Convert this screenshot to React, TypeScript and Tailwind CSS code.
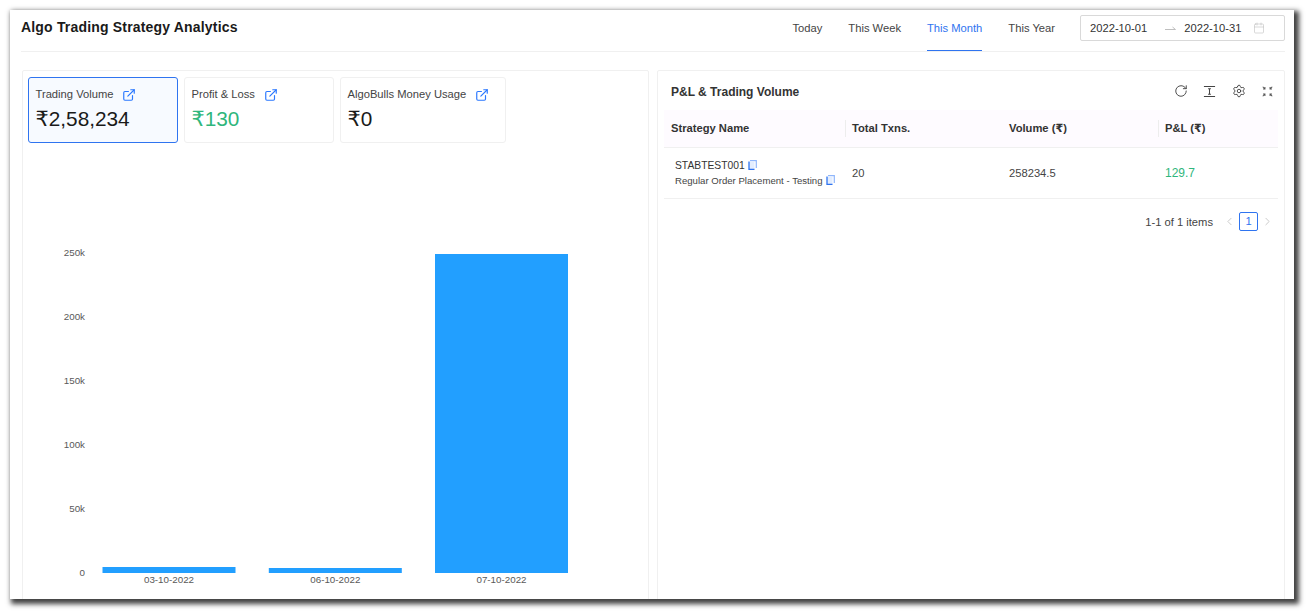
import { Calendar, ChevronLeft, ChevronRight, ExternalLink, RotateCw, Settings } from 'lucide-react';

const stats = [
  { label: 'Trading Volume', value: '₹2,58,234', width: 'w-[150px]', active: true, color: 'text-[#1a1a1a]', gap: 'ml-[9px]' },
  { label: 'Profit & Loss', value: '₹130', width: 'w-[150px]', active: false, color: 'text-[#2fb67c]', gap: 'ml-[9px]' },
  { label: 'AlgoBulls Money Usage', value: '₹0', width: 'w-[166px]', active: false, color: 'text-[#1a1a1a]', gap: 'ml-[9px]' },
];

const ticks = [
  { label: '250k', y: 253 },
  { label: '200k', y: 317 },
  { label: '150k', y: 381 },
  { label: '100k', y: 445 },
  { label: '50k', y: 509 },
  { label: '0', y: 573 },
];

const bars = [
  { x: 102.5, y: 567, h: 6, label: '03-10-2022' },
  { x: 268.8, y: 568, h: 5, label: '06-10-2022' },
  { x: 435, y: 254, h: 319, label: '07-10-2022' },
];

function CopyIcon() {
  return (
    <svg viewBox="0 0 9 10" className="w-[9px] h-[10px] inline-block ml-[3px] align-[-1px]" fill="none">
      <path d="M1 2H6.5V9.4H1Z" fill="#e3edfe" />
      <path d="M2 0.7H8.3V8" stroke="#8fb6fb" strokeWidth="1.2" />
      <path d="M1 1.5V9.4H6.5" stroke="#2f74f0" strokeWidth="1.3" />
    </svg>
  );
}

function ColumnHeightIcon() {
  return (
    <svg viewBox="0 0 14 14" className="w-[13px] h-[13px]" fill="none" stroke="#444" strokeWidth="1.1">
      <path d="M1 1.5H13M1 12.5H13M7 4V10M5.5 4H8.5M5.5 10H8.5" />
    </svg>
  );
}

function CompressIcon() {
  return (
    <svg viewBox="0 0 12 12" className="w-[11px] h-[11px]" fill="none" stroke="#555" strokeWidth="1.1">
      <path d="M0.8 0.8L3 3M3.2 1.2V3.2H1.2M11.2 0.8L9 3M8.8 1.2V3.2H10.8M0.8 11.2L3 9M1.2 8.8H3.2V10.8M11.2 11.2L9 9M10.8 8.8H8.8V10.8" />
    </svg>
  );
}

function HalfArrow() {
  return (
    <svg viewBox="0 0 11 6" className="w-[11px] h-[6px] ml-[18px]" fill="none" stroke="#bfbfbf" strokeWidth="1">
      <path d="M0 4.5H10.5L7.5 2" />
    </svg>
  );
}

function VolumeChart() {
  return (
    <svg width="626" height="456" viewBox="23 143 626 456" className="block">
      {ticks.map((t) => (
        <text key={t.label} x="85" y={t.y + 3} textAnchor="end" fontSize="9.8" fill="#595959" fontFamily="'Liberation Sans', sans-serif">
          {t.label}
        </text>
      ))}
      {bars.map((b) => (
        <g key={b.label}>
          <rect x={b.x} y={b.y} width="133" height={b.h} fill="#229fff" />
          <text x={b.x + 66.5} y="583" textAnchor="middle" fontSize="9.8" fill="#595959" fontFamily="'Liberation Sans', sans-serif">
            {b.label}
          </text>
        </g>
      ))}
    </svg>
  );
}

export default function App() {
  return (
    <main className="w-[1310px] h-[615px] bg-white overflow-hidden pt-[10px] pl-[10px] font-['Liberation_Sans','DejaVu_Sans',sans-serif] text-[#333]">
      <div className="w-[1284px] h-[589px] bg-white overflow-hidden shadow-[3px_3px_5px_2px_rgba(0,0,0,0.75)] px-[9px]">
        {/* Header */}
        <div className="h-[42px] ml-[2px] border-b border-[#f0f0f0] flex items-start justify-between">
          <h1 className="text-[14px] leading-[17px] mt-[9px] font-bold text-[#1a1a1a] tracking-[0.18px]">
            Algo Trading Strategy Analytics
          </h1>
          <div className="flex items-start">
            <div className="flex text-[11.2px] h-[41px] text-[#444]">
              <span className="mr-[26px] pt-[10px]">Today</span>
              <span className="mr-[26px] pt-[10px]">This Week</span>
              <span className="mr-[26px] pt-[10px] h-[41px] text-[#2f74f0] border-b border-[#2f74f0]">This Month</span>
              <span className="mr-[25px] pt-[10px]">This Year</span>
            </div>
            <div className="w-[205px] h-[26px] mt-[5px] border border-[#d9d9d9] rounded-[2px] flex items-center pl-[9px] text-[11.2px] text-[#333]">
              <span>2022-10-01</span>
              <HalfArrow />
              <span className="ml-[8px]">2022-10-31</span>
              <Calendar className="w-[12px] h-[12px] ml-[12px] text-[#bfbfbf]" strokeWidth={1.2} />
            </div>
          </div>
        </div>

        <div className="flex gap-[8px] mt-[18px] ml-[3px]">
          {/* Left panel */}
          <section className="w-[627px] h-[540px] border border-[#f0f0f0] rounded-[2px] shrink-0">
            <div className="flex gap-[6px] pt-[6px] pl-[5px]">
              {stats.map((s) => (
                <div
                  key={s.label}
                  className={`${s.width} h-[66px] rounded-[3px] border pl-[6.5px] pt-[9px] ${
                    s.active ? 'border-[#2f74f0] bg-[#f7faff]' : 'border-[#f0f0f0] bg-white'
                  }`}
                >
                  <div className="flex items-center text-[11.2px] leading-[15px] text-[#444]">
                    <span>{s.label}</span>
                    <ExternalLink className={`w-[14px] h-[14px] text-[#2b78ff] ${s.gap}`} strokeWidth={2} />
                  </div>
                  <div className={`text-[20.8px] leading-[26px] mt-[4px] ${s.color}`}>{s.value}</div>
                </div>
              ))}
            </div>
            <VolumeChart />
          </section>

          {/* Right panel */}
          <section className="w-[628px] h-[540px] border border-[#f0f0f0] rounded-[2px] shrink-0 px-[6px]">
            <div className="h-[39px] flex items-start justify-between">
              <h2 className="text-[12px] font-bold text-[#333] pl-[7px] pt-[14px] leading-[14px]">P&amp;L &amp; Trading Volume</h2>
              <div className="flex items-center gap-[16px] pt-[13px] pr-[5px] text-[#444]">
                <RotateCw className="w-[14px] h-[14px] -mr-[1px]" strokeWidth={1.6} />
                <ColumnHeightIcon />
                <Settings className="w-[14px] h-[14px]" strokeWidth={1.6} />
                <CompressIcon />
              </div>
            </div>

            <table className="w-[614px] table-fixed border-collapse text-[11.2px]">
              <colgroup>
                <col className="w-[181px]" />
                <col className="w-[157px]" />
                <col className="w-[156px]" />
                <col className="w-[120px]" />
              </colgroup>
              <thead>
                <tr className="h-[37px] bg-[#fefbff] border-b border-[#f0f0f0] text-left font-bold text-[#333]">
                  <th className="px-[7px]">Strategy Name</th>
                  <th className="px-[7px] relative">
                    <span className="absolute left-0 top-[10px] h-[17px] border-l border-[#ededed]" />
                    Total Txns.
                  </th>
                  <th className="px-[7px]">Volume (₹)</th>
                  <th className="px-[7px] relative">
                    <span className="absolute left-0 top-[10px] h-[17px] border-l border-[#ededed]" />
                    P&amp;L (₹)
                  </th>
                </tr>
              </thead>
              <tbody>
                <tr className="h-[51px] border-b border-[#f0f0f0] text-[#444]">
                  <td className="pl-[11px] pr-0 pt-[1px]">
                    <div className="text-[10.3px] leading-[14px] text-[#333]">
                      STABTEST001
                      <CopyIcon />
                    </div>
                    <div className="text-[9.6px] leading-[14px] mt-[1px] whitespace-nowrap">
                      Regular Order Placement - Testing
                      <CopyIcon />
                    </div>
                  </td>
                  <td className="px-[7px] pt-[1px]">20</td>
                  <td className="px-[7px] pt-[1px]">258234.5</td>
                  <td className="px-[7px] pt-[1px] text-[12px] text-[#2fb67c]">129.7</td>
                </tr>
              </tbody>
            </table>

            <div className="flex items-center justify-end h-[19px] mt-[13px] pr-[4px] text-[11.2px] text-[#444]">
              <span className="pt-[2px]">1-1 of 1 items</span>
              <ChevronLeft className="w-[13px] h-[13px] ml-[10px] text-[#bfbfbf]" strokeWidth={1.5} />
              <span className="w-[19px] h-[19px] ml-[3px] border border-[#2f74f0] rounded-[2px] text-[#2f74f0] flex items-center justify-center">1</span>
              <ChevronRight className="w-[13px] h-[13px] ml-[3px] text-[#bfbfbf]" strokeWidth={1.5} />
            </div>
          </section>
        </div>
      </div>
    </main>
  );
}
